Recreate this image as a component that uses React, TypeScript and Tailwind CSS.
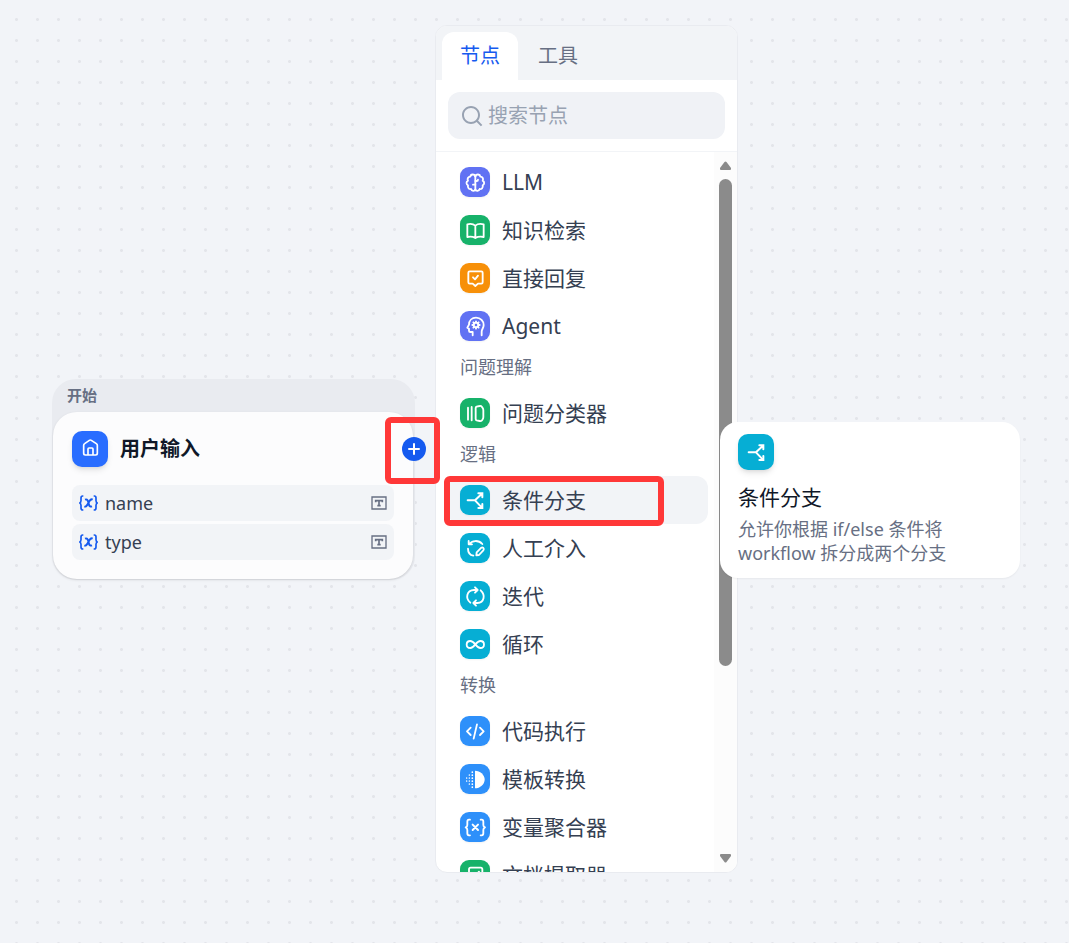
import React, { useState } from 'react';
import { RiSearchLine } from 'react-icons/ri';

type IconName =
  | 'llm'
  | 'knowledge'
  | 'answer'
  | 'agent'
  | 'classifier'
  | 'branch'
  | 'human'
  | 'iteration'
  | 'loop'
  | 'code'
  | 'template'
  | 'variable'
  | 'document';

interface BlockItem {
  icon: IconName;
  label: string;
  color: string;
}

interface BlockGroup {
  title?: string;
  items: BlockItem[];
}

const INDIGO = 'bg-[#6172f3]';
const GREEN = 'bg-[#17b26a]';
const ORANGE = 'bg-[#f79009]';
const CYAN = 'bg-[#06aed4]';
const BLUE = 'bg-[#2e90fa]';

const groups: BlockGroup[] = [
  {
    items: [
      { icon: 'llm', label: 'LLM', color: INDIGO },
      { icon: 'knowledge', label: '知识检索', color: GREEN },
      { icon: 'answer', label: '直接回复', color: ORANGE },
      { icon: 'agent', label: 'Agent', color: INDIGO },
    ],
  },
  {
    title: '问题理解',
    items: [{ icon: 'classifier', label: '问题分类器', color: GREEN }],
  },
  {
    title: '逻辑',
    items: [
      { icon: 'branch', label: '条件分支', color: CYAN },
      { icon: 'human', label: '人工介入', color: CYAN },
      { icon: 'iteration', label: '迭代', color: CYAN },
      { icon: 'loop', label: '循环', color: CYAN },
    ],
  },
  {
    title: '转换',
    items: [
      { icon: 'code', label: '代码执行', color: BLUE },
      { icon: 'template', label: '模板转换', color: BLUE },
      { icon: 'variable', label: '变量聚合器', color: BLUE },
      { icon: 'document', label: '文档提取器', color: GREEN },
    ],
  },
];

// All glyphs share a 90x90 box
const glyphs: Record<IconName, React.ReactNode> = {
  llm: (
    <>
      <path d="M46 25V70" />
      <path d="M46 28C43 20 32 21 31 29C24 29 21 36 24 41C18 44 18 52 24 55C22 63 28 67 33 66C35 73 44 73 46 68" />
      <path d="M46 28C49 20 60 21 61 29C68 29 71 36 68 41C74 44 74 52 68 55C70 63 64 67 59 66C57 73 48 73 46 68" />
      <path d="M46 53H39M46 42H50Q54 42 54 38" />
    </>
  ),
  knowledge: (
    <path d="M46 32C39 26 30 26 22 28V66C30 64 39 65 46 69C53 65 62 64 71 66V28C62 26 53 26 46 32V69" />
  ),
  answer: (
    <>
      <path d="M29 25H64Q68 25 68 29V58Q68 62 64 62H54L46 69L38 62H29Q25 62 25 58V29Q25 25 29 25Z" />
      <path d="M39 43L45 49L54 38" />
    </>
  ),
  agent: (
    <>
      <path d="M38 73V63H31Q27 63 27 59V53L22 50L27 41C27 28 36 20 48 20C62 20 71 31 71 42C71 52 65 54 65 62V73" />
      <circle cx="48" cy="42" r="7" />
      <path d="M48 31V35M48 49V53M37 42H41M55 42H59M40 34L43 37M53 47L56 50M56 34L53 37M43 47L40 50" />
    </>
  ),
  classifier: (
    <>
      <path d="M24 29V65M35 27V67" />
      <path d="M47 30Q47 27 50 26L59 24Q63 23 66 27L68 30Q70 33 70 37V57Q70 61 68 64L66 67Q63 70 59 69L50 67Q47 66 47 63Z" />
    </>
  ),
  branch: <path d="M23 46H45L65 27M55 25H67V37M45 46L65 67M55 69H67V57" strokeWidth="6" strokeLinejoin="miter" />,
  human: (
    <>
      <path d="M26 24V34H36M27 34C36 22 55 20 67 33M24 47C24 57 30 66 40 68" />
      <path d="M49 67L50 58L64 44Q67 42 70 45Q73 48 70 52L57 66Z" />
    </>
  ),
  iteration: (
    <>
      <path d="M31 65C15 51 20 28 42 27H53M45 19L53 27L45 35" />
      <path d="M62 28C77 42 73 65 52 66H40M48 58L40 66L48 74" />
    </>
  ),
  loop: (
    <path d="M46 46C40 39 36 36 31 36C25 36 20 40 20 46.500C20 53 25 57 31 57C36 57 40 54 46 46C52 39 56 36 61 36C67 36 72 40 72 46.500C72 53 67 57 61 57C56 57 52 54 46 46Z" />
  ),
  code: <path d="M32 35L21 46L32 57M60 35L71 46L60 57M51 25L41 68" />,
  template: (
    <>
      <path d="M45 20C60 20 74 32 74 46.500C74 61 60 73 45 73Z" fill="currentColor" stroke="none" />
      <path d="M37 24V24.500M37 33V33.500M37 42V42.500M37 51V51.500M37 60V60.500M37 69V69.500" strokeWidth="5" />
      <path d="M28 33V33.500M28 42V42.500M28 51V51.500M28 60V60.500M20 42V42.500M20 51V51.500" strokeWidth="4" />
    </>
  ),
  variable: (
    <>
      <path d="M30 23H27Q22 23 22 29V39Q22 44 17 46Q22 48 22 54V64Q22 70 27 70H30" />
      <path d="M62 23H65Q70 23 70 29V39Q70 44 75 46Q70 48 70 54V64Q70 70 65 70H62" />
      <path d="M38 38L54 54M54 38L38 54" strokeWidth="6" />
    </>
  ),
  document: (
    <>
      <path d="M32 23H62Q67 23 67 28V67Q67 71 62 71H32Q27 71 27 67V28Q27 23 32 23Z" />
      <path d="M36 48L44 40L49 44L57 35V50H36M38 60H56" />
    </>
  ),
};

function BlockGlyph({ name, className }: { name: IconName; className: string }) {
  return (
    <svg
      viewBox="0 0 90 90"
      className={className}
      fill="none"
      stroke="currentColor"
      strokeWidth="5.500"
      strokeLinecap="round"
      strokeLinejoin="round"
      aria-hidden="true"
    >
      {glyphs[name]}
    </svg>
  );
}

function VariableMark() {
  return (
    <svg viewBox="0 0 57 48" className="h-4 w-[19px] text-[#155aef]" fill="none" stroke="currentColor" strokeWidth="5" aria-hidden="true">
      <path d="M13 3H11Q6 3 6 9V17Q6 23 1 24Q6 25 6 31V39Q6 45 11 45H13" />
      <path d="M44 3H46Q51 3 51 9V17Q51 23 56 24Q51 25 51 31V39Q51 45 46 45H44" />
      <path d="M18 14Q25 11 27 19L30 29Q32 37 39 34M41 14Q36 11 31 19L26 28Q21 37 16 34" strokeWidth="6" />
    </svg>
  );
}

function TextTypeMark() {
  return (
    <svg viewBox="0 0 48 42" className="h-3.5 w-4 text-[#676f83]" fill="none" stroke="currentColor" strokeWidth="4" aria-hidden="true">
      <path d="M3 3H45V39H3Z" />
      <path d="M14 19V14H34V19M24 14V29M19 29H29" strokeWidth="5" />
    </svg>
  );
}

function InputRow({ name }: { name: string }) {
  return (
    <li className="flex h-9 items-center gap-[7px] rounded-lg bg-[#f2f4f7] px-[7px]">
      <VariableMark />
      <span className="flex-1 text-lg leading-6 text-[#354052]">{name}</span>
      <TextTypeMark />
    </li>
  );
}

function StartNode() {
  return (
    <section className="relative w-[363px] rounded-3xl bg-[#e9ebf0] pr-0.5 pb-px pl-px">
      <header className="flex h-[33px] items-center px-[14px] text-[15px] font-bold text-[#676f83]">开始</header>
      <div className="rounded-3xl bg-[#fcfcfd] px-[19px] py-[19px] shadow-sm">
        <div className="flex items-center gap-3">
          <div className="flex size-9 items-center justify-center rounded-[10px] bg-[#296dff] text-white shadow-md">
            <svg viewBox="0 0 108 108" className="size-9" fill="none" stroke="currentColor" strokeWidth="5" strokeLinejoin="round" aria-hidden="true">
              <path d="M35 43Q35 40 38 38L52 28Q55 26 58 28L73 38Q76 40 76 43V67Q76 72 71 72H40Q35 72 35 67Z" />
              <path d="M48 72V54Q48 51 51 51H60Q63 51 63 54V72" />
            </svg>
          </div>
          <h2 className="text-xl font-bold text-[#101828]">用户输入</h2>
        </div>
        <ul className="mt-[18px] flex flex-col gap-[3px]">
          <InputRow name="name" />
          <InputRow name="type" />
        </ul>
      </div>
      <button
        type="button"
        aria-label="添加节点"
        className="absolute top-[58px] -right-[11px] flex size-6 items-center justify-center rounded-full bg-[#155aef] text-white"
      >
        <svg viewBox="0 0 24 24" className="size-6" stroke="currentColor" strokeWidth="2" strokeLinecap="round" aria-hidden="true">
          <path d="M12 7V17M7 12H17" />
        </svg>
      </button>
      <div className="pointer-events-none absolute top-[38px] -right-[25px] h-[67px] w-[55px] rounded-md border-6 border-[#ff3838]" />
    </section>
  );
}

function BlockRow({ item, active }: { item: BlockItem; active: boolean }) {
  return (
    <li className="relative">
      <button
        type="button"
        className={`flex h-12 w-full items-center gap-3 rounded-xl px-3 text-left ${active ? 'bg-[#f2f4f7]' : ''}`}
      >
        <span className={`flex size-[30px] shrink-0 items-center justify-center rounded-[9px] text-white shadow-xs ${item.color}`}>
          <BlockGlyph name={item.icon} className="size-[30px]" />
        </span>
        <span className="text-[21px] leading-7 text-[#354052]">{item.label}</span>
      </button>
      {active && (
        <div className="pointer-events-none absolute top-0 -left-1 h-[50px] w-[220px] rounded-md border-6 border-[#ff3838]" />
      )}
    </li>
  );
}

function ScrollTrack() {
  return (
    <div className="flex w-[23px] shrink-0 flex-col items-center bg-[#fcfcfc] py-[9px] text-[#8b8b8b]" aria-hidden="true">
      <svg viewBox="0 0 13 10" className="h-[10px] w-[13px]" fill="currentColor">
        <path d="M5.500 1Q6.500 0 7.500 1L12 7Q12.500 9 11 9H2Q0.500 9 1 7Z" />
      </svg>
      <div className="mt-2 h-[487px] w-[13px] rounded-full bg-[#8b8b8b]" />
      <svg viewBox="0 0 13 10" className="mt-auto h-[10px] w-[13px]" fill="currentColor">
        <path d="M5.500 9Q6.500 10 7.500 9L12 3Q12.500 1 11 1H2Q0.500 1 1 3Z" />
      </svg>
    </div>
  );
}

function BlockSelector() {
  const [query, setQuery] = useState('');

  return (
    <section className="w-[303px] overflow-hidden rounded-xl border border-[#e9ebf0] bg-white">
      {/* Tabs */}
      <div role="tablist" className="flex h-[54px] items-end bg-[#f2f4f7] pl-[6px] text-xl">
        <button type="button" role="tab" aria-selected="true" className="h-12 rounded-t-xl bg-white px-[18px] text-[#155aef]">
          节点
        </button>
        <button type="button" role="tab" aria-selected="false" className="h-12 px-5 text-[#676f83]">
          工具
        </button>
      </div>

      {/* Search */}
      <div className="border-b border-[#f2f4f7] p-3">
        <label className="flex h-[47px] items-center gap-1 rounded-xl bg-[#f0f2f6] px-3 text-[#98a2b2]">
          <RiSearchLine className="size-6 shrink-0" aria-hidden="true" />
          <input
            type="text"
            aria-label="搜索节点"
            placeholder="搜索节点"
            value={query}
            onChange={(e) => setQuery(e.target.value)}
            className="w-full min-w-0 bg-transparent text-xl text-[#354052] outline-none placeholder:text-[#98a2b2]"
          />
        </label>
      </div>

      {/* Block list */}
      <div className="flex h-[720px] overflow-hidden">
        <div className="min-w-0 flex-1 pt-[6px] pr-[6px] pl-3">
          {groups.map((group, i) => (
            <div key={i}>
              {group.title && (
                <h3 className="px-3 pt-1 pb-2 text-lg leading-[27px] text-[#676f83]">{group.title}</h3>
              )}
              <ul>
                {group.items
                  .filter((item) => item.label.includes(query))
                  .map((item) => (
                    <BlockRow key={item.label} item={item} active={item.icon === 'branch'} />
                  ))}
              </ul>
            </div>
          ))}
        </div>
        <ScrollTrack />
      </div>
    </section>
  );
}

function BlockTooltip() {
  return (
    <aside role="tooltip" className="w-[300px] rounded-[18px] bg-white px-[18px] pt-3 pb-[13px] shadow-xs">
      <div className="flex size-9 items-center justify-center rounded-[10px] bg-[#06aed4] text-white shadow-md">
        <BlockGlyph name="branch" className="size-[30px]" />
      </div>
      <h3 className="mt-[13px] text-[21px] leading-7 text-[#101828]">条件分支</h3>
      <p className="mt-[6px] text-lg leading-6 text-[#676f83]">允许你根据 if/else 条件将 workflow 拆分成两个分支</p>
    </aside>
  );
}

export default function App() {
  return (
    <main className="relative min-h-screen overflow-hidden bg-[#f2f4f8] bg-[radial-gradient(circle,#e3e5ea_1px,transparent_2px)] bg-size-[21px_21px] bg-position-[6px_9px] font-['Noto_Sans','Noto_Sans_CJK_SC',sans-serif]">
      {/* Items placed on the canvas */}
      <div className="absolute top-[25px] left-[435px]">
        <BlockSelector />
      </div>
      <div className="absolute top-[379px] left-[52px]">
        <StartNode />
      </div>
      <div className="absolute top-[422px] left-[720px]">
        <BlockTooltip />
      </div>
    </main>
  );
}
